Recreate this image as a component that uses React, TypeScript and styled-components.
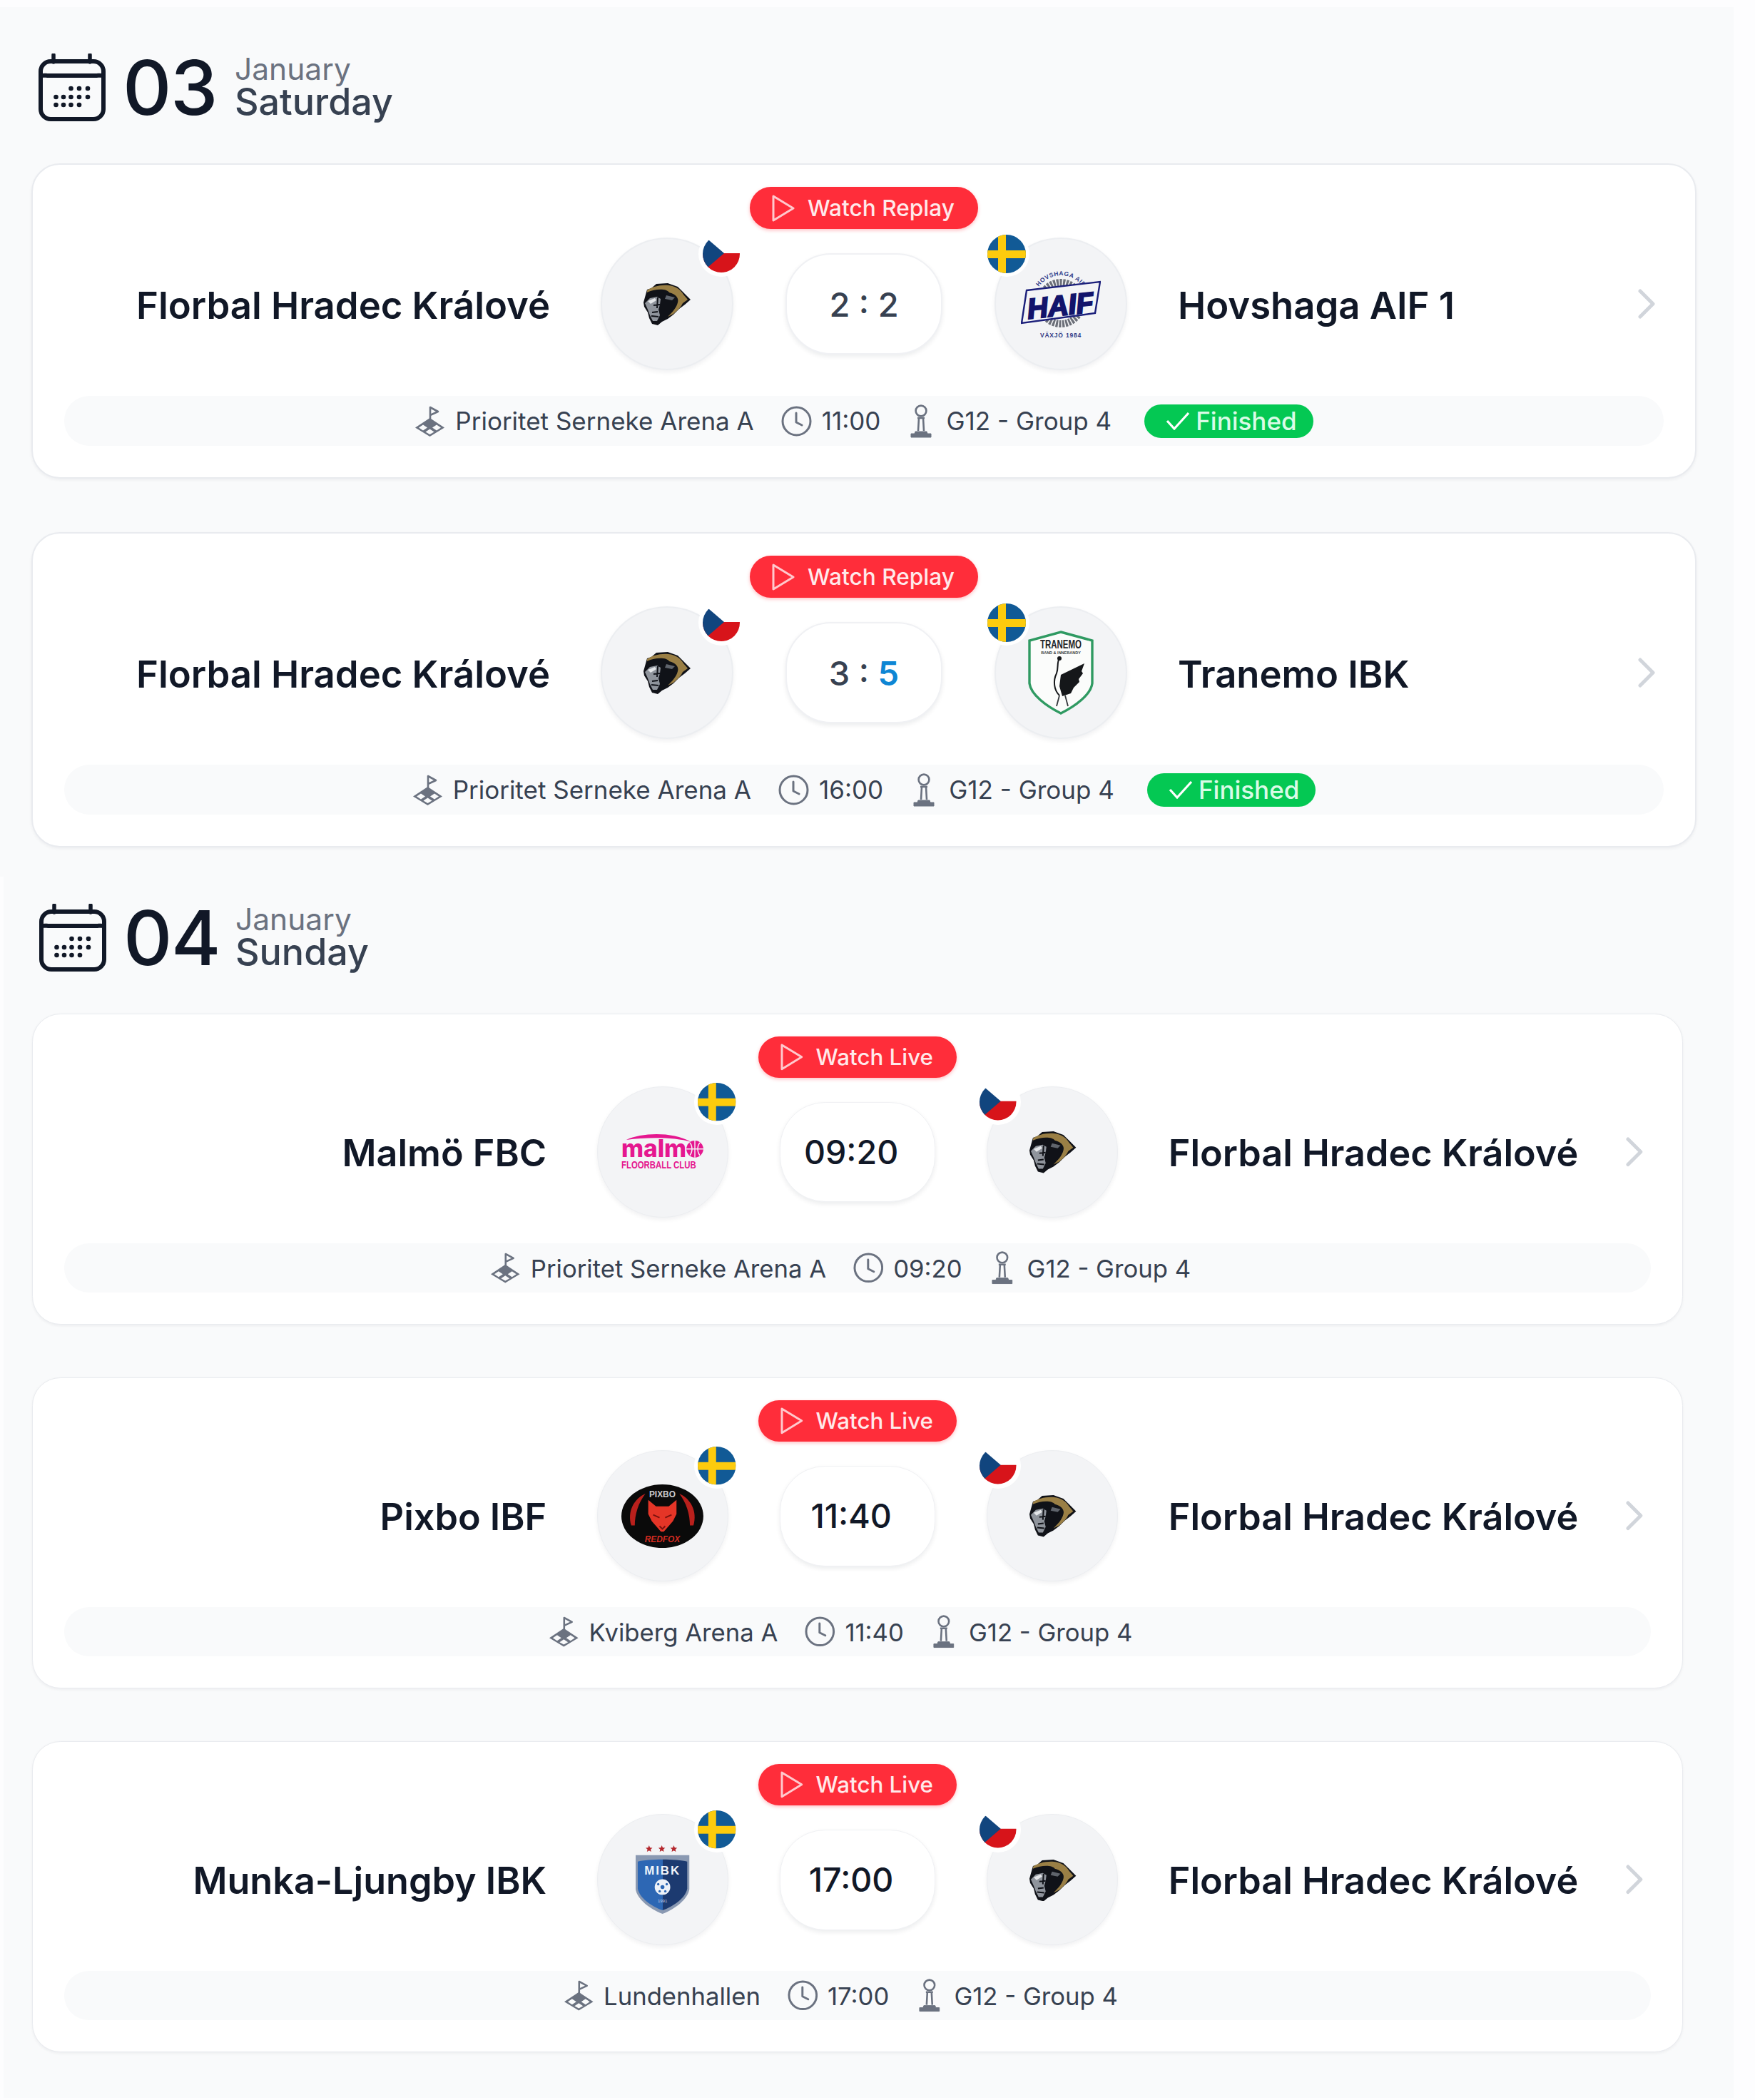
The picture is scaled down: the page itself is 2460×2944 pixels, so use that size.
import React from "react";
import styled, { createGlobalStyle } from "styled-components";

const GlobalStyle = createGlobalStyle`
  html, body {
    margin: 0;
    padding: 0;
    background: #fdfdfe;
  }
  body {
    font-family: Inter, "Noto Sans", sans-serif;
    color: #111827;
  }
  * {
    box-sizing: border-box;
  }
`;

const Page = styled.div`
  width: 2460px;
  height: 2944px;
  padding-top: 10px;
  overflow: hidden;
`;

const DaySection = styled.section<{ $left: number; $inset: number; $right: number; $top: number; $bottom: number }>`
  width: ${(props) => 2430 - props.$left}px;
  margin-left: ${(props) => props.$left}px;
  padding: ${(props) => props.$top}px ${(props) => props.$right}px ${(props) => props.$bottom}px ${(props) => props.$inset}px;
  background: #f9fafb;
`;

const DayHeader = styled.header`
  display: flex;
  align-items: center;
  height: 95px;
  margin-bottom: 59px;
  padding-left: 10px;
`;

const DayNumber = styled.div`
  width: 130px;
  margin-left: 24px;
  font-size: 106px;
  line-height: 1;
  font-weight: 500;
  letter-spacing: -1.5px;
  color: #111827;
`;

const DayText = styled.div`
  display: flex;
  flex-direction: column;
  margin: -3px 0 0 27px;
`;

const Month = styled.span`
  font-size: 42.5px;
  line-height: 43px;
  color: #6b7280;
`;

const Weekday = styled.span`
  font-size: 52px;
  line-height: 50px;
  font-weight: 500;
  color: #374151;
`;

const Card = styled.article<{ $dense?: boolean }>`
  display: flex;
  flex-direction: column;
  align-items: center;
  padding: 31px 44px 44px;
  background: #fff;
  border: 2px solid #e9ebef;
  border-radius: 40px;
  box-shadow: 0 2px 4px rgba(17, 24, 39, 0.05);
  zoom: ${(props) => (props.$dense ? 0.9905 : 1)};

  & + & {
    margin-top: 75px;
  }
`;

const WatchBadge = styled.div`
  display: flex;
  align-items: center;
  gap: 18px;
  height: 59px;
  padding: 0 33px 0 31px;
  margin-bottom: 12px;
  border-radius: 30px;
  background: #ff2d3a;
  box-shadow: 0 2px 5px rgba(255, 45, 58, 0.3);
  color: #ffe9ea;
  font-size: 31.6px;
  font-weight: 500;
  white-space: nowrap;
`;

const MatchRow = styled.div`
  position: relative;
  display: grid;
  grid-template-columns: 1fr 186px 220px 186px 1fr;
  column-gap: 73px;
  align-items: center;
  width: 100%;
  height: 186px;
`;

const TeamName = styled.div<{ $side: "home" | "away" }>`
  margin: 3px ${(props) => (props.$side === "home" ? -2 : 0)}px 0 ${(props) => (props.$side === "home" ? 0 : -2)}px;
  font-size: 52.6px;
  font-weight: 600;
  color: #111827;
  white-space: nowrap;
  text-align: ${(props) => (props.$side === "home" ? "right" : "left")};
`;

const Crest = styled.div`
  position: relative;
  display: flex;
  align-items: center;
  justify-content: center;
  width: 186px;
  height: 186px;
  border-radius: 50%;
  background: #f3f4f6;
  border: 2px solid #eceef1;
  box-shadow: 0 3px 6px rgba(17, 24, 39, 0.06);
`;

const FlagHolder = styled.div<{ $side: "home" | "away" }>`
  position: absolute;
  top: -11px;
  ${(props) => (props.$side === "home" ? "right: -17px;" : "left: -17px;")}
  width: 64px;
  height: 64px;
  padding: 5px;
  border-radius: 50%;
  background: #fff;
`;

const ScorePill = styled.div<{ $isTime?: boolean }>`
  display: flex;
  align-items: center;
  justify-content: center;
  width: 220px;
  height: 142px;
  padding-right: ${(props) => (props.$isTime ? 18 : 0)}px;
  border-radius: 64px;
  background: #fff;
  border: 2px solid #f0f1f4;
  box-shadow: 0 3px 6px rgba(17, 24, 39, 0.08);
  font-size: 47px;
  font-weight: 500;
  color: ${(props) => (props.$isTime ? "#111827" : "#374151")};
  white-space: pre;
`;

const Winner = styled.span`
  color: #0e86d4;
  font-weight: 600;
`;

const Chevron = styled.svg`
  position: absolute;
  right: 12px;
  top: 72px;
`;

const InfoBar = styled.div`
  display: flex;
  align-items: center;
  justify-content: center;
  gap: 38px;
  width: 100%;
  height: 70px;
  margin-top: 36px;
  border-radius: 35px;
  background: #f9fafb;
`;

const InfoItem = styled.div`
  display: flex;
  align-items: center;
  gap: 14px;
  font-size: 35px;
  color: #374151;
  white-space: nowrap;
`;

const TrophyItem = styled(InfoItem)`
  gap: 16px;
`;

const FinishedBadge = styled.div`
  display: flex;
  align-items: center;
  gap: 8px;
  height: 47px;
  margin-left: 8px;
  padding: 0 23px 0 30px;
  border-radius: 24px;
  background: #04c853;
  color: #d9fbe6;
  font-size: 35px;
  font-weight: 500;
`;

// upcoming matches keep an empty status slot, the row sits a bit left of centre
const EmptyStatus = styled.div`
  width: 10px;
`;

const CalendarIcon = () => (
  <svg width="94" height="95" viewBox="0 0 94 95" fill="none">
    <rect x="3" y="11" width="88" height="81" rx="14" stroke="#111827" strokeWidth="6" />
    <path d="M3 35 C3 29 8 31 14 31 H80 C86 31 91 29 91 35" stroke="#111827" strokeWidth="6" />
    <path d="M21 2 V12 M72 2 V12" stroke="#111827" strokeWidth="5.5" strokeLinecap="round" />
    {[45.5, 57, 69].map((x) => (
      <circle key={x} cx={x} cy="49" r="3.3" fill="#111827" />
    ))}
    {[24.5, 35, 45.5, 57, 69].map((x) => (
      <circle key={x} cx={x} cy="61" r="3.3" fill="#111827" />
    ))}
    {[24.5, 35, 45.5, 57].map((x) => (
      <circle key={x} cx={x} cy="72" r="3.3" fill="#111827" />
    ))}
  </svg>
);

const PitchIcon = () => (
  <svg width="43" height="43" viewBox="0 0 43 43" fill="none">
    <path d="M22 23 V2 L33 8 L22 13" stroke="#6b7280" strokeWidth="2.6" strokeLinejoin="round" />
    <path d="M21.5 17 L42 30.5 L21.5 43 L1 30.5 Z" fill="#6b7280" />
    <path d="M12 26.5 L18 30.5 L12 34.5 L6 30.5 Z M31 26.5 L37 30.5 L31 34.5 L25 30.5 Z M21.5 32.5 L27.5 36.5 L21.5 40 L15.5 36.5 Z" fill="#f9fafb" />
  </svg>
);

const ClockIcon = () => (
  <svg width="43" height="43" viewBox="0 0 43 43" fill="none" stroke="#6b7280" strokeWidth="3" strokeLinecap="round" strokeLinejoin="round">
    <circle cx="21.5" cy="21.5" r="19.5" />
    <path d="M21 10 V23 L29 27" />
  </svg>
);

const TrophyIcon = () => (
  <svg width="38" height="47" viewBox="0 0 38 47" fill="none" stroke="#6b7280" strokeWidth="2.6">
    <circle cx="19" cy="9" r="7.4" />
    <path d="M14 19 H24 M16 19 L15 37 M22 19 L23 37" />
    <path d="M11 38 H27 L28 41 H33 V46 H5 V41 H10 Z" fill="#6b7280" strokeWidth="1" />
  </svg>
);

const PlayIcon = () => (
  <svg width="32" height="38" viewBox="0 0 32 38" fill="none">
    <path d="M2 2 L30 19 L2 36 Z" stroke="#ffc9cd" strokeWidth="3" strokeLinejoin="round" />
  </svg>
);

const CheckIcon = () => (
  <svg width="34" height="26" viewBox="0 0 34 26" fill="none">
    <path d="M2 13 L12 24 L32 2" stroke="#fff" strokeWidth="3.2" />
  </svg>
);

const SwedenFlag = () => (
  <svg width="54" height="54" viewBox="0 0 54 54">
    <defs>
      <clipPath id="se-clip">
        <circle cx="27" cy="27" r="27" />
      </clipPath>
    </defs>
    <g clipPath="url(#se-clip)">
      <rect width="54" height="54" fill="#115a96" />
      <rect x="15" width="11" height="54" fill="#fdcb0d" />
      <rect y="22" width="54" height="11" fill="#fdcb0d" />
    </g>
  </svg>
);

const CzechFlag = () => (
  <svg width="54" height="54" viewBox="0 0 54 54">
    <defs>
      <clipPath id="cz-clip">
        <circle cx="27" cy="27" r="26" />
      </clipPath>
    </defs>
    <g clipPath="url(#cz-clip)">
      <rect width="54" height="54" fill="#fff" />
      <rect y="26" width="54" height="28" fill="#d7141a" />
      <path d="M-4 -4 L31 26 L-4 56 Z" fill="#11457e" />
    </g>
  </svg>
);

const LionLogo = () => (
  <svg width="70" height="60" viewBox="0 0 70 60">
    <path d="M2 28 L7 10 L13 8 L20 2 L36 1 L50 6 L58 14 L68 24 L60 31 L52 37 L44 45 L36 51 L28 55 L22 60 L14 58 L10 50 L8 42 L3 34 Z" fill="#101218" />
    <path d="M7 11 C14 6 25 3 37 4 C47 5 54 10 58 17 L64 24 L57 29 C55 34 50 39 44 44 L36 48 C42 42 48 36 50 28 C52 22 47 16 38 14 C35 9 20 8 7 14 Z" fill="#9a7f45" />
    <path d="M4 29 L11 22 L21 20 L26 23 L25 31 L23 38 L25 46 L21 54 L15 54 L11 46 L8 38 Z" fill="#8f949c" />
    <path d="M8 26 L18 22 L20 25 L12 30 Z" fill="#e4e6e9" />
    <path d="M22 21 L21 36 M16 32 L25 31 M14 42 L22 41 M13 47 L23 48" stroke="#101218" strokeWidth="2" />
    <path d="M34 18 L46 21 L42 25 L32 23 Z" fill="#5f646c" />
  </svg>
);

const HaifLogo = () => (
  <svg width="112" height="100" viewBox="0 0 112 100">
    <circle cx="56" cy="49" r="29" fill="none" stroke="#6b6f78" strokeWidth="10" strokeDasharray="3 1.5" />
    <path id="haif-top" d="M20 36 A38 38 0 0 1 92 36" fill="none" />
    <text fontFamily="Liberation Sans, sans-serif" fontSize="8.5" fontWeight="700" fill="#303a86" letterSpacing="0.6">
      <textPath href="#haif-top" startOffset="50%" textAnchor="middle">HOVSHAGA AIF</textPath>
    </text>
    <path d="M8 31 L111 19 L104 63 L1 77 Z" fill="#f3f4f6" stroke="#1b1f7a" strokeWidth="2.4" />
    <text x="55" y="66" textAnchor="middle" fontFamily="Liberation Sans, sans-serif" fontSize="40" fontWeight="700" fontStyle="italic" fill="#12146b" stroke="#12146b" strokeWidth="2.2" transform="rotate(-6 56 50)">HAIF</text>
    <text x="56" y="97" textAnchor="middle" fontFamily="Liberation Sans, sans-serif" fontSize="8.5" fontWeight="700" fill="#303a86" letterSpacing="0.8">VÄXJÖ 1984</text>
  </svg>
);

const TranemoLogo = () => (
  <svg width="92" height="118" viewBox="0 0 92 118">
    <path d="M46 2 L90 14 V74 C88 90 66 106 46 116 C26 106 4 90 2 74 V14 Z" fill="#fbfcfb" stroke="#2f9a62" strokeWidth="3.4" />
    <text x="46" y="25" textAnchor="middle" fontFamily="Liberation Sans, sans-serif" fontSize="11.5" fontWeight="700" fill="#24262a" transform="translate(0 -12) scale(1 1.5)">TRANEMO</text>
    <text x="46" y="33" textAnchor="middle" fontFamily="Liberation Sans, sans-serif" fontSize="5.5" fontWeight="700" fill="#3c3f44">BAND &amp; INNEBANDY</text>
    <circle cx="44" cy="39" r="3" fill="#15171a" />
    <path d="M44 39 C40 45 43 52 40 60 C35 70 36 83 44 91" stroke="#15171a" strokeWidth="2" fill="none" />
    <path d="M46 62 L79 46 L75 57 L77 60 L71 68 L72 72 L64 80 L60 88 L48 92 L44 78 Z" fill="#15171a" />
    <path d="M44 91 L40 106 M52 91 L56 106" stroke="#33363a" strokeWidth="1.8" fill="none" />
  </svg>
);

const MalmoLogo = () => (
  <svg width="118" height="52" viewBox="0 0 118 52">
    <path d="M8 9 C30 -1 72 -3 100 12 C76 5 38 5 8 9 Z" fill="#e5178f" />
    <text x="1" y="33" fontFamily="Inter, sans-serif" fontSize="34" fontWeight="800" fill="#e5178f" textLength="92" lengthAdjust="spacingAndGlyphs">malm</text>
    <circle cx="105" cy="22" r="12" fill="#e5178f" />
    <path d="M93 22 H117 M105 10 V34 M98 13 C102 18 102 26 98 31 M112 13 C108 18 108 26 112 31" stroke="#f3f4f6" strokeWidth="1.4" fill="none" />
    <text x="1" y="37" fontFamily="Liberation Sans, sans-serif" fontSize="11.5" fontWeight="700" fill="#e5178f" transform="scale(1 1.33)">FLOORBALL CLUB</text>
  </svg>
);

const PixboLogo = () => (
  <svg width="116" height="90" viewBox="0 0 116 90">
    <ellipse cx="58" cy="45" rx="58" ry="45" fill="#0a0a0a" />
    <path d="M14 58 C8 38 18 20 34 13 C24 26 19 42 19 58 Z M102 58 C108 38 98 20 82 13 C92 26 97 42 97 58 Z" fill="#b9201c" />
    <text x="58" y="18" textAnchor="middle" fontFamily="Liberation Sans, sans-serif" fontSize="12" fontWeight="700" fill="#c9cbcf">PIXBO</text>
    <path d="M38 22 L49 31 H67 L78 22 L78 42 L73 52 L60 67 H56 L43 52 L38 42 Z" fill="#e53527" />
    <path d="M45 43 L54 47 M71 43 L62 47 M54 59 L58 63 L62 59" stroke="#7a120e" strokeWidth="2" fill="none" />
    <text x="58" y="82" textAnchor="middle" fontFamily="Liberation Sans, sans-serif" fontSize="12" fontWeight="700" fontStyle="italic" fill="#d22a20">REDFOX</text>
  </svg>
);

const MibkLogo = () => (
  <svg width="80" height="98" viewBox="0 0 80 98">
    <defs>
      <linearGradient id="mibk-fill" x1="0" x2="1" y1="0" y2="0">
        <stop offset="0.5" stopColor="#2d67b4" />
        <stop offset="0.5" stopColor="#1c3a70" />
      </linearGradient>
    </defs>
    {[21, 39, 56].map((x) => (
      <polygon
        key={x}
        transform={`translate(${x} 5)`}
        points="0,-5 1.4,-1.6 4.8,-1.5 2.2,0.7 3,4.2 0,2.3 -3,4.2 -2.2,0.7 -4.8,-1.5 -1.4,-1.6"
        fill="#b3262c"
      />
    ))}
    <path d="M2 14 H78 V62 C76 76 58 90 40 97 C22 90 4 76 2 62 Z" fill="#8a99b2" />
    <path d="M5 23 C20 19 60 19 75 23 V61 C73 74 56 86 40 92 C24 86 7 74 5 61 Z" fill="url(#mibk-fill)" />
    <text x="40" y="41" textAnchor="middle" fontFamily="Liberation Sans, sans-serif" fontSize="17" fontWeight="700" fill="#f2f5fa" letterSpacing="2">MIBK</text>
    <circle cx="40" cy="59" r="11" fill="#eef2f8" />
    <circle cx="40" cy="59" r="2.8" fill="#2d67b4" />
    <circle cx="34" cy="55" r="1.7" fill="#2d67b4" />
    <circle cx="46" cy="55" r="1.7" fill="#2d67b4" />
    <circle cx="36" cy="65" r="1.7" fill="#2d67b4" />
    <circle cx="44" cy="65" r="1.7" fill="#2d67b4" />
    <text x="40" y="81" textAnchor="middle" fontFamily="Liberation Sans, sans-serif" fontSize="6" fill="#c9d5e8">1991</text>
  </svg>
);

const flags = { se: SwedenFlag, cz: CzechFlag };

interface ITeam {
  name: string;
  flag: "se" | "cz";
  logo: React.ComponentType;
}

const hradec: ITeam = { name: "Florbal Hradec Králové", flag: "cz", logo: LionLogo };

interface IMatch {
  home: ITeam;
  away: ITeam;
  score?: [number, number];
  time: string;
  arena: string;
  finished?: boolean;
}

const saturday: IMatch[] = [
  {
    home: hradec,
    away: { name: "Hovshaga AIF 1", flag: "se", logo: HaifLogo },
    score: [2, 2],
    time: "11:00",
    arena: "Prioritet Serneke Arena A",
    finished: true,
  },
  {
    home: hradec,
    away: { name: "Tranemo IBK", flag: "se", logo: TranemoLogo },
    score: [3, 5],
    time: "16:00",
    arena: "Prioritet Serneke Arena A",
    finished: true,
  },
];

const sunday: IMatch[] = [
  {
    home: { name: "Malmö FBC", flag: "se", logo: MalmoLogo },
    away: hradec,
    time: "09:20",
    arena: "Prioritet Serneke Arena A",
  },
  {
    home: { name: "Pixbo IBF", flag: "se", logo: PixboLogo },
    away: hradec,
    time: "11:40",
    arena: "Kviberg Arena A",
  },
  {
    home: { name: "Munka-Ljungby IBK", flag: "se", logo: MibkLogo },
    away: hradec,
    time: "17:00",
    arena: "Lundenhallen",
  },
];

const TeamCrest = ({ team, side }: { team: ITeam; side: "home" | "away" }) => {
  const Logo = team.logo;
  const Flag = flags[team.flag];
  return (
    <Crest>
      <Logo />
      <FlagHolder $side={side}>
        <Flag />
      </FlagHolder>
    </Crest>
  );
};

const MatchCard = ({ match, dense }: { match: IMatch; dense?: boolean }) => {
  const { home, away, score, time, arena, finished } = match;
  return (
    <Card $dense={dense}>
      <WatchBadge>
        <PlayIcon />
        {finished ? "Watch Replay" : "Watch Live"}
      </WatchBadge>
      <MatchRow>
        <TeamName $side="home">{home.name}</TeamName>
        <TeamCrest team={home} side="home" />
        {score ? (
          <ScorePill>
            {score[0]} : {score[1] > score[0] ? <Winner>{score[1]}</Winner> : score[1]}
          </ScorePill>
        ) : (
          <ScorePill $isTime>{time}</ScorePill>
        )}
        <TeamCrest team={away} side="away" />
        <TeamName $side="away">{away.name}</TeamName>
        <Chevron width="24" height="42" viewBox="0 0 24 42" fill="none">
          <path d="M3 3 L21 21 L3 39" stroke="#d1d5db" strokeWidth="5" strokeLinecap="round" strokeLinejoin="round" />
        </Chevron>
      </MatchRow>
      <InfoBar>
        <InfoItem>
          <PitchIcon />
          {arena}
        </InfoItem>
        <InfoItem>
          <ClockIcon />
          {time}
        </InfoItem>
        <TrophyItem>
          <TrophyIcon />
          G12 - Group 4
        </TrophyItem>
        {finished ? (
          <FinishedBadge>
            <CheckIcon />
            Finished
          </FinishedBadge>
        ) : (
          <EmptyStatus />
        )}
      </InfoBar>
    </Card>
  );
};

const App = () => {
  return (
    <Page>
      <GlobalStyle />
      <DaySection $left={0} $inset={44} $right={52} $top={65} $bottom={41}>
        <DayHeader>
          <CalendarIcon />
          <DayNumber>03</DayNumber>
          <DayText>
            <Month>January</Month>
            <Weekday>Saturday</Weekday>
          </DayText>
        </DayHeader>
        {saturday.map((match) => (
          <MatchCard key={match.time} match={match} />
        ))}
      </DaySection>
      <DaySection $left={5} $inset={40} $right={71} $top={38} $bottom={64}>
        <DayHeader>
          <CalendarIcon />
          <DayNumber>04</DayNumber>
          <DayText>
            <Month>January</Month>
            <Weekday>Sunday</Weekday>
          </DayText>
        </DayHeader>
        {sunday.map((match) => (
          <MatchCard key={match.time} match={match} dense />
        ))}
      </DaySection>
    </Page>
  );
};

export default App;
